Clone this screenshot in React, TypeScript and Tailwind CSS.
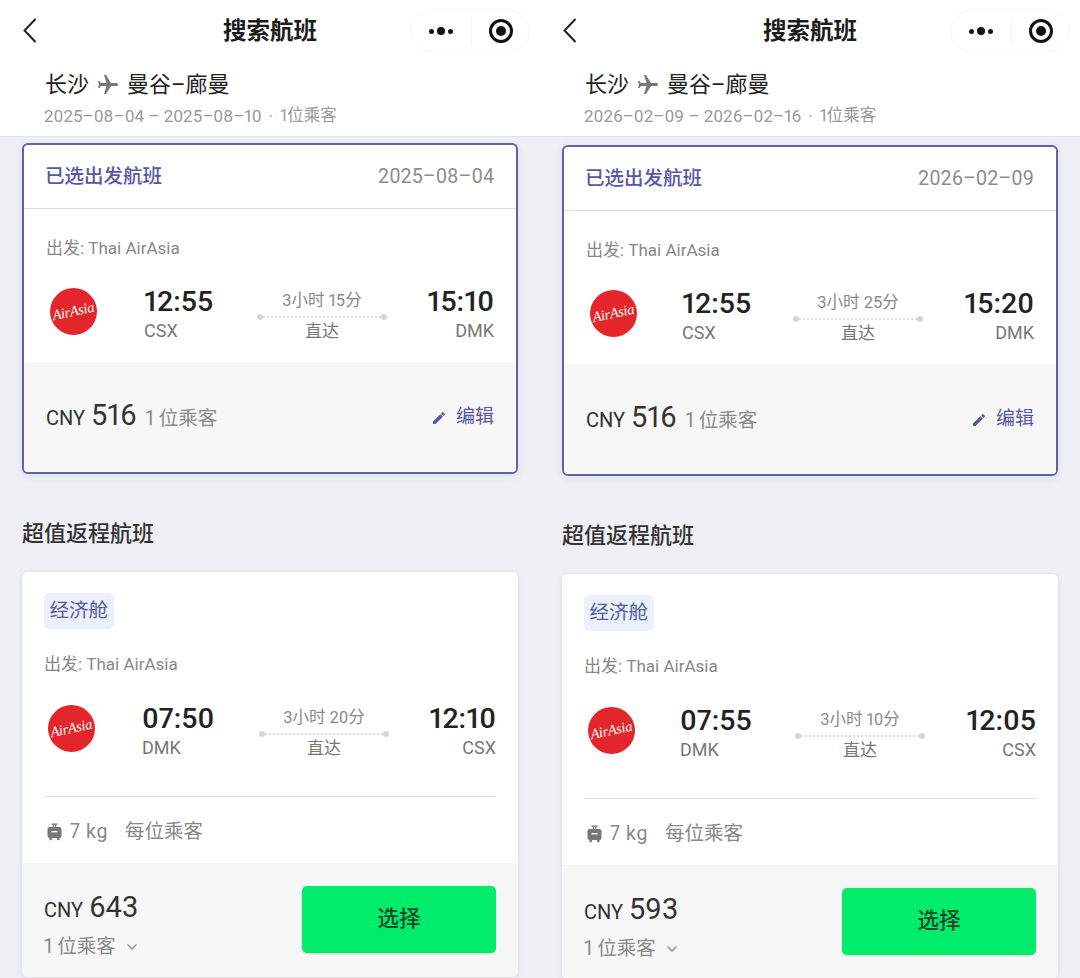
import { ChevronDown } from "lucide-react";
import { MdEdit, MdFlight } from "react-icons/md";

type Leg = {
  depart: string;
  arrive: string;
  from: string;
  to: string;
  duration: string;
};

type PanelData = {
  dates: string;
  selectedDate: string;
  offsetClass: string;
  selectedCols: string;
  returnCols: string;
  outbound: Leg;
  inbound: Leg;
  price: string;
};

const panels: PanelData[] = [
  {
    dates: "2025–08–04 – 2025–08–10",
    selectedDate: "2025–08–04",
    offsetClass: "mt-[6px]",
    selectedCols: "grid-cols-[98px_113px_130px_1fr]",
    returnCols: "grid-cols-[98px_117px_130px_1fr]",
    outbound: { depart: "12:55", arrive: "15:10", from: "CSX", to: "DMK", duration: "3小时 15分" },
    inbound: { depart: "07:50", arrive: "12:10", from: "DMK", to: "CSX", duration: "3小时 20分" },
    price: "643",
  },
  {
    dates: "2026–02–09 – 2026–02–16",
    selectedDate: "2026–02–09",
    offsetClass: "mt-[8px]",
    selectedCols: "grid-cols-[96px_111px_130px_1fr]",
    returnCols: "grid-cols-[96px_115px_130px_1fr]",
    outbound: { depart: "12:55", arrive: "15:20", from: "CSX", to: "DMK", duration: "3小时 25分" },
    inbound: { depart: "07:55", arrive: "12:05", from: "DMK", to: "CSX", duration: "3小时 10分" },
    price: "593",
  },
];

function AirAsiaLogo() {
  return (
    <div className="ml-1 mt-[3px] grid h-[47px] w-[47px] place-items-center rounded-full bg-[#e3262b]">
      <span className="-rotate-12 font-['Liberation_Serif',serif] text-[14.5px] italic leading-none tracking-[-0.3px] text-white">
        AirAsia
      </span>
    </div>
  );
}

function LuggageIcon() {
  return (
    <svg width="15" height="18" viewBox="0 0 15 18" className="text-[#777]" fill="currentColor">
      <path d="M4.5 0.5h6v1.2H9.2v2.6H8V1.7H7v2.6H5.8V1.7H4.5z" />
      <rect x="0.5" y="4" width="14" height="11" rx="2.2" />
      <rect x="4.5" y="8" width="6" height="1.4" fill="#fff" />
      <rect x="2.5" y="15" width="2.4" height="2.2" />
      <rect x="10.1" y="15" width="2.4" height="2.2" />
    </svg>
  );
}

function FlightRow({ leg, cols }: { leg: Leg; cols: string }) {
  return (
    <div className={`grid items-start ${cols}`}>
      <AirAsiaLogo />
      <div>
        <div className="text-[28.5px] font-medium leading-[34px] text-[#222]">{leg.depart}</div>
        <div className="text-[18px] leading-[24px] text-[#777]">{leg.from}</div>
      </div>
      <div className="mt-[5px] text-center">
        <div className="text-[16.5px] leading-[22px] text-[#8a8a8a]">{leg.duration}</div>
        <div className="mt-[2px] flex items-center">
          <span className="h-[6px] w-[6px] rounded-full bg-[#d5d5d5]" />
          <span className="flex-1 border-t-2 border-dotted border-[#dcdcdc]" />
          <span className="h-[6px] w-[6px] rounded-full bg-[#d5d5d5]" />
        </div>
        <div className="text-[17px] leading-[22px] text-[#777]">直达</div>
      </div>
      <div className="text-right">
        <div className="text-[28.5px] font-medium leading-[34px] text-[#222]">{leg.arrive}</div>
        <div className="text-[18px] leading-[24px] text-[#777]">{leg.to}</div>
      </div>
    </div>
  );
}

function Panel({ data }: { data: PanelData }) {
  return (
    <div className="w-[540px] shrink-0">
      <header className="relative z-10 h-[137px] border-b border-[#e2e2e4] bg-white">
        <div className="relative flex h-[62px] items-center justify-center pt-[2px]">
          <svg
            width="14"
            height="25"
            viewBox="0 0 14 25"
            fill="none"
            stroke="#222"
            strokeWidth="2"
            className="absolute left-[23px] top-[18px]"
          >
            <path d="M12.5 1 1.5 12.5l11 11.5" />
          </svg>
          <h1 className="text-[23.5px] font-bold text-[#1c1c1c]">搜索航班</h1>
          <div className="absolute left-[410px] top-[10px] flex h-[42px] w-[120px] items-center rounded-full border border-[#f8f8f8]">
            <div className="flex w-[60px] items-center justify-center gap-[3px]">
              <span className="h-[5px] w-[5px] rounded-full bg-[#111]" />
              <span className="h-[8px] w-[8px] rounded-full bg-[#111]" />
              <span className="h-[5px] w-[5px] rounded-full bg-[#111]" />
            </div>
            <span className="h-[28px] w-px bg-[#f4f4f4]" />
            <div className="flex flex-1 items-center justify-center">
              <span className="grid h-[24px] w-[24px] place-items-center rounded-full border-[3px] border-[#111]">
                <span className="h-[10px] w-[10px] rounded-full bg-[#111]" />
              </span>
            </div>
          </div>
        </div>
        <div className="mt-[8px] flex items-center pl-[45px] text-[22px] leading-[30px] text-[#222]">
          <span>长沙</span>
          <MdFlight className="mx-[7px] rotate-90 text-[#777]" size={24} />
          <span>曼谷–廊曼</span>
        </div>
        <div className="mt-[6px] flex pl-[44px] text-[17px] leading-[20px] text-[#999]">
          <span>{data.dates}</span>
          <span className="mx-[7px]">·</span>
          <span className="text-[16.5px]">1位乘客</span>
        </div>
      </header>

      <div className="px-[22px]">
        <section
          className={`${data.offsetClass} overflow-hidden rounded-[6px] border-2 border-[#5f62a8] bg-white shadow-[0_2px_8px_rgba(80,90,160,0.12)]`}
        >
          <div className="flex h-[64px] items-center justify-between border-b border-[#ddd] pl-[21px] pr-[22px] pt-[1px]">
            <span className="text-[19.5px] font-medium text-[#5558a5]">已选出发航班</span>
            <span className="text-[19.7px] text-[#8d8d8d]">{data.selectedDate}</span>
          </div>
          <div className="h-[153px] px-[22px] pt-[27px]">
            <div className="text-[17px] leading-[24px] text-[#888]">出发: Thai AirAsia</div>
            <div className="mt-[25px]">
              <FlightRow leg={data.outbound} cols={data.selectedCols} />
            </div>
          </div>
          <div className="flex h-[110px] items-center justify-between bg-[#f7f7f8] pb-[2px] pl-[22px] pr-[22px]">
            <div className="flex items-baseline">
              <span className="text-[20px] text-[#333]">CNY</span>
              <span className="ml-[6px] text-[29px] text-[#333]">516</span>
              <span className="ml-[9px] text-[19.5px] text-[#8a8a8a]">1 位乘客</span>
            </div>
            <div className="mt-[3px] flex items-center text-[19px] text-[#5558a5]">
              <MdEdit size={16} />
              <span className="ml-[9px]">编辑</span>
            </div>
          </div>
        </section>

        <h2 className="mt-[43px] text-[22px] font-medium leading-[34px] text-[#333]">超值返程航班</h2>

        <section className="mt-[21px] overflow-hidden rounded-[6px] bg-white shadow-[0_1px_5px_rgba(60,70,110,0.14)]">
          <div className="px-[22px] pt-[21px]">
            <span className="inline-block h-[36px] rounded-[5px] bg-[#eaf1fb] px-[5.5px] text-[19.5px] leading-[36px] text-[#5558a5]">
              经济舱
            </span>
            <div className="mt-[23px] text-[17px] leading-[24px] text-[#888]">出发: Thai AirAsia</div>
            <div className="mt-[26px] pb-[36px]">
              <FlightRow leg={data.inbound} cols={data.returnCols} />
            </div>
            <div className="flex h-[67px] items-center border-t border-[#ddd] pl-[3px] pt-[4px] text-[19.5px] text-[#888]">
              <LuggageIcon />
              <span className="ml-[8px] tracking-[0.6px]">7 kg</span>
              <span className="ml-[17px]">每位乘客</span>
            </div>
          </div>
          <div className="flex h-[114px] items-start justify-between bg-[#f7f7f8] px-[22px] pt-[23px]">
            <div>
              <div className="flex items-baseline leading-[42px]">
                <span className="text-[20px] text-[#333]">CNY</span>
                <span className="ml-[6px] text-[29px] text-[#333]">{data.price}</span>
              </div>
              <div className="mt-[3px] flex items-center text-[19.5px] leading-[26px] text-[#8a8a8a]">
                1 位乘客
                <ChevronDown className="ml-[8px]" size={16} strokeWidth={2} />
              </div>
            </div>
            <button className="grid h-[67px] w-[194px] place-items-center rounded-[5px] bg-[#00ec6a] text-[21.5px] font-medium text-[#14462c] shadow-[0_1px_2px_rgba(0,0,0,0.15)]">
              选择
            </button>
          </div>
        </section>
      </div>
    </div>
  );
}

export default function App() {
  return (
    <div className="flex h-[978px] w-[1080px] overflow-hidden bg-[#eff0f5] font-['Roboto','Noto_Sans_CJK_SC',sans-serif] proportional-nums">
      {panels.map((p) => (
        <Panel key={p.selectedDate} data={p} />
      ))}
    </div>
  );
}
